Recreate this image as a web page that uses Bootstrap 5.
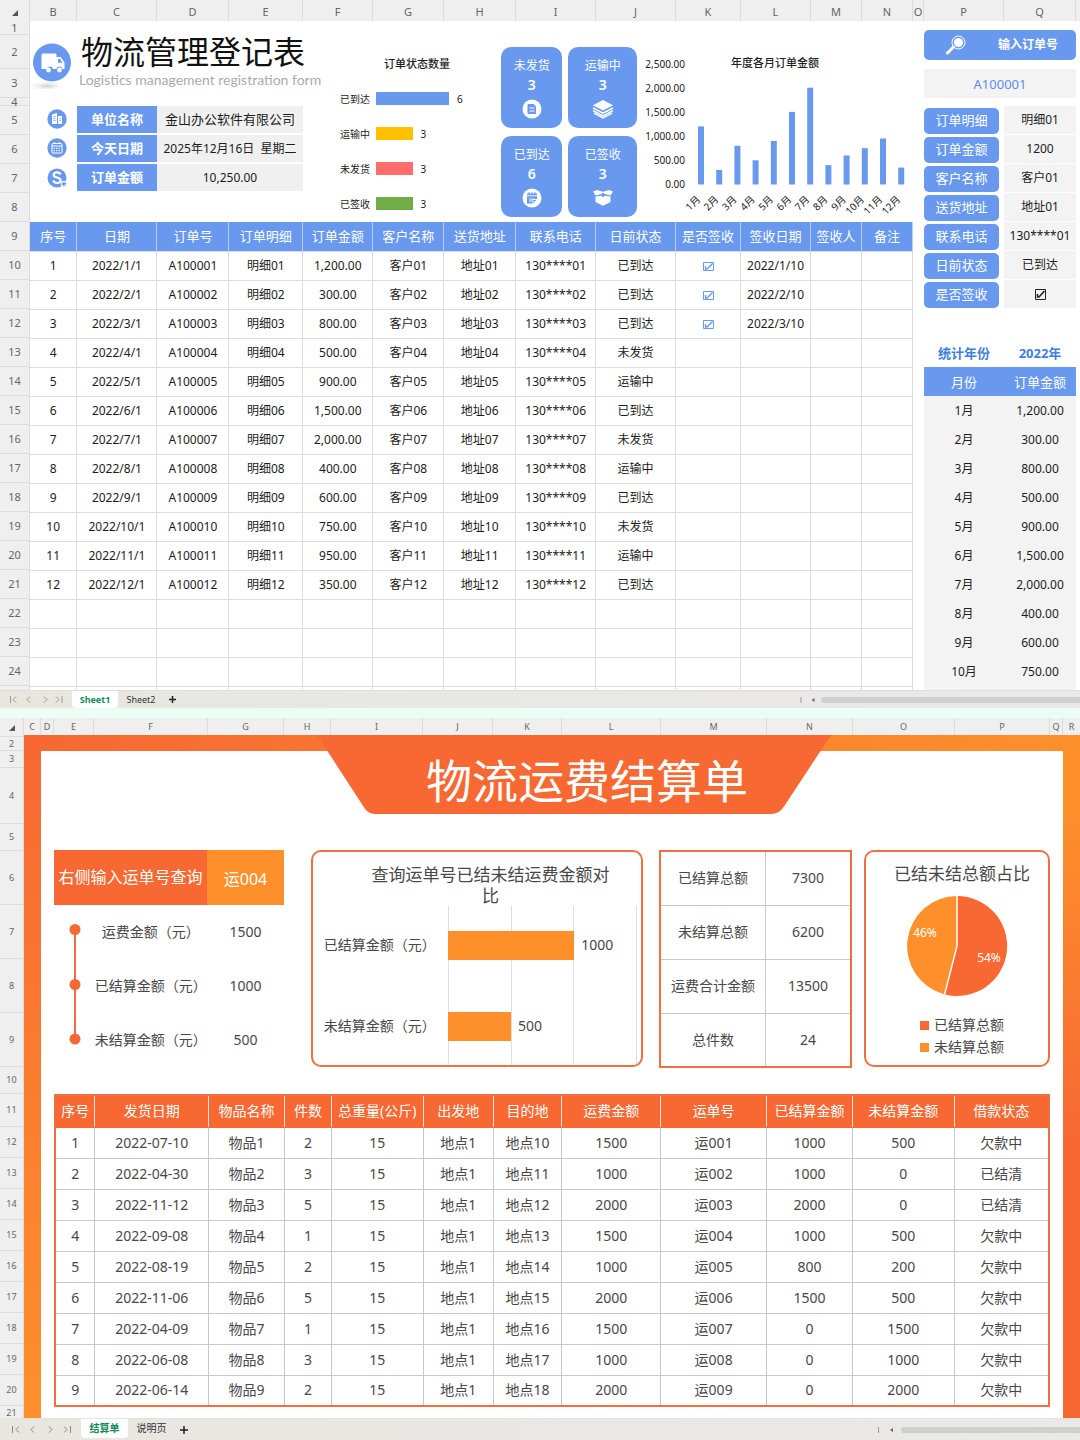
<!DOCTYPE html>
<html lang="zh-CN">
<head>
<meta charset="utf-8">
<meta name="viewport" content="width=device-width, initial-scale=1">
<title>物流管理登记表</title>
<link href="https://cdn.jsdelivr.net/npm/bootstrap@5.3.0/dist/css/bootstrap.min.css" rel="stylesheet">
<style>
:root { --blue:#6899ee; --orange:#f76833; --amber:#fd902b; --chrome:#efefef; --rule:#dcdcdc; --cell:#f3f3f3; }
body { font-family:"Noto Sans","Noto Sans CJK SC",sans-serif; font-size:12px; line-height:16px; color:#1c1c1c; background:#ecfdf6; }
h1, h2, h3, p, dl, dd, dt { margin:0; font-weight:400; }

/* spreadsheet chrome */
.colheads { display:grid; background:var(--chrome); color:#666; font-size:11px; text-align:center; }
.colheads > span { border-right:1px solid var(--rule); overflow:hidden; min-width:0; }
.colheads > span:last-child { border-right:0; }
.heads-a { height:21px; line-height:24px; grid-template-columns:30px 47fr 80fr 72fr 74fr 70fr 71fr 72fr 80fr 80fr 65fr 70fr 51fr 51fr 11fr 80fr 72fr 4fr; }
.heads-b { height:17px; line-height:18px; font-size:9px; grid-template-columns:24px 17px 13px 40fr 114fr 76fr 47fr 92fr 70fr 69fr 99fr 106fr 86fr 102fr 95fr 13px 17px; }
.rowheads { background:var(--chrome); color:#666; font-size:11px; border-right:1px solid var(--rule); }
.rowheads div { display:flex; align-items:center; justify-content:center; border-bottom:1px solid var(--rule); height:29px; }
.rowheads .last { border-bottom:0; }
.rowheads .tall-2 { height:2px; } .rowheads .tall-4 { height:4px; } .rowheads .tall-8 { height:8px; }
.rowheads .tall-14 { height:14px; } .rowheads .tall-17 { height:17px; } .rowheads .tall-27 { height:27px; }
.rowheads .tall-31 { height:31px; } .rowheads .tall-33 { height:33px; } .rowheads .tall-34 { height:34px; }
.rowheads .tall-54 { height:54px; } .rowheads .tall-56 { height:56px; }
.tabbar { background:linear-gradient(90deg,#e8e6df,#e9e9e8); border-top:1px solid #dedede; font-size:9px; position:relative; }
.tabbar.bar-a { height:18px; } .tabbar.bar-b { height:22px; border-top-color:#e4e3df; }
.tabbar a { color:#333; text-decoration:none; text-align:center; line-height:17px; }
.tabbar a.current { background:#fff; color:#138a58; font-weight:700; border-radius:0 0 4px 4px; }
.bar-a a { width:46px; }
.bar-b a { width:47px; font-size:10px; line-height:19px; height:19px; }
.tabbar button { border:0; background:none; padding:0; line-height:0; }
.tabbar .pager { width:72px; padding-left:9px; } .bar-b .pager { width:81px; }
.hscroll { width:26%; } .bar-b .hscroll { width:19%; }
.hscroll i { height:6px; border-radius:3px 0 0 3px; background:#cfcfcd; }

/* registration sheet */
.sheet-a { display:grid; grid-template-columns:30px minmax(0,883fr) 11fr minmax(0,152fr) 4fr; background:#fff; height:669px; overflow:hidden; }
.dash { height:201px; display:grid; grid-template-columns:minmax(0,292fr) minmax(0,179fr) minmax(0,136fr) minmax(0,276fr); }
.emblem { width:47px; padding-top:20px; }
.title-a { font-size:32px; line-height:42px; color:#111; padding:10px 0 0 4px; white-space:nowrap; }
.sub-a { font-size:14px; line-height:14px; color:#ababab; font-family:Lato,"Noto Sans",sans-serif; padding-left:2px; white-space:nowrap; }
.facts { display:grid; grid-template-columns:47fr 80fr 146fr 19fr; row-gap:2px; padding-top:17px; }
.facts dt, .facts dd { height:27px; line-height:27px; text-align:center; white-space:nowrap; }
.facts dt { background:var(--blue); color:#fff; font-weight:700; font-size:13px; }
.facts dd { background:#f0f0f0; font-size:12px; }
.facts dd.wide { font-size:13px; }
.facts svg { display:block; margin:2px 0 0 15px; }
.small-title { font-size:11px; font-weight:500; line-height:16px; text-align:center; height:60px; padding:35px 0 0 11px; }
.hbar { height:35px; font-size:10px; }
.hbar .key { width:54px; padding-right:6px; text-align:right; white-space:nowrap; }
.hbar i { display:block; height:13px; }
.tiles { display:grid; grid-template-columns:61fr 68fr; gap:8px 6px; padding:26px 0 4px; font-size:12px; text-align:center; }
.tile { background:var(--blue); color:#fff; border-radius:10px; height:81px; padding-top:10px; line-height:18px; }
.tile b { display:block; font-weight:600; font-size:14px; line-height:20px; }
.tile svg { display:block; margin:4px auto 0; }

.grid-a { table-layout:fixed; width:100%; margin:0; text-align:center; font-size:12px; white-space:nowrap; color:inherit; }
.grid-a td, .grid-a th { height:29px; padding:0; vertical-align:middle; border:1px solid var(--rule); border-left:0; background:#fff; color:#1c1c1c; }
.grid-a th { background:var(--blue); color:#fff; font-weight:400; font-size:13px; border-color:#b9cff6; border-top:0; border-bottom:0; }
.grid-a tr.stub td { height:4px; border-bottom:0; }
.tick { appearance:none; width:11px; height:11px; margin:0; vertical-align:middle; background:center/100% 100% no-repeat url("data:image/svg+xml,%3Csvg xmlns='http://www.w3.org/2000/svg' viewBox='0 0 11 11'%3E%3Cpath d='M.5 1.500h10v8H.5z' fill='none' stroke='%236899ee'/%3E%3Cpath d='M2.500 5v3h1.500L9.500 2.500' fill='none' stroke='%236899ee' stroke-width='1.400'/%3E%3C/svg%3E"); }
.tick.dark { background-image:url("data:image/svg+xml,%3Csvg xmlns='http://www.w3.org/2000/svg' viewBox='0 0 11 11'%3E%3Cpath d='M.5.5h10v10H.5z' fill='none' stroke='%23222'/%3E%3Cpath d='M2.500 5v3h1.500L9.500 2' fill='none' stroke='%23222' stroke-width='1.600'/%3E%3C/svg%3E"); }

.find { height:30px; background:var(--blue); color:#fff; border:0; border-radius:5px; font-size:12px; font-weight:700; padding:0 18px 0 22px; margin:9px 0; }
.order { height:29px; width:100%; border:0; background:var(--cell); color:#5a8fec; text-align:center; font-size:13px; padding:0; }
.detail { display:grid; grid-template-columns:minmax(0,75fr) minmax(0,72fr); column-gap:5px; margin-top:8px; text-align:center; }
.detail dt { height:26px; line-height:25px; margin:2px 0 1px; border-radius:5px; background:var(--blue); color:#fff; font-size:13px; }
.detail dd { height:28px; line-height:28px; margin-bottom:1px; background:var(--cell); white-space:nowrap; }
.grid-m { table-layout:fixed; width:100%; margin:29px 0 0; text-align:center; color:#1c1c1c; }
.grid-m td, .grid-m th { height:29px; padding:0; border:0; vertical-align:middle; background:var(--cell); color:#1c1c1c; font-weight:400; font-size:12px; }
.grid-m .year th { background:#fff; color:#3f7fe0; font-weight:700; font-size:13px; }
.grid-m .cap th { background:var(--blue); color:#fff; font-size:13px; }
.month-box { background:linear-gradient(var(--cell),var(--cell)) bottom/100% 40px no-repeat; }

/* settlement sheet */
.second { margin-top:10px; }
.sheet-b { display:grid; grid-template-columns:24px minmax(0,1fr); color:#484848; font-size:14px; height:683px; overflow:hidden; }
.sheet-b .rowheads { font-size:9px; }
.frame { background:
  linear-gradient(var(--orange),var(--amber)) left/17px 100% no-repeat,
  linear-gradient(var(--amber) 10%,var(--orange) 60%) right/17px 100% no-repeat,
  linear-gradient(90deg,var(--orange),var(--amber)) top/100% 16px no-repeat, #fff; padding:0 30px; }
.banner { width:52%; margin:0 auto 0 26%; height:79px; padding:10px 0 0 30px; color:#fff; font-size:46px; line-height:70px; text-align:center; white-space:nowrap;
  background:center/100% 100% no-repeat url("data:image/svg+xml,%3Csvg xmlns='http://www.w3.org/2000/svg' viewBox='0 0 510 79' preserveAspectRatio='none'%3E%3Cpath d='M4 0h506L464 71q-5 8-13 8H61q-7 0-11-7z' fill='%23f76833'/%3E%3C/svg%3E"); }
.panels { display:grid; grid-template-columns:minmax(0,230fr) 27fr minmax(0,333fr) 16fr minmax(0,193fr) 12fr minmax(0,186fr); margin-top:36px; height:217px; }
.ask { height:55px; color:#fff; }
.ask label { flex:2 0 0; background:var(--orange); font-size:16px; line-height:55px; text-align:center; white-space:nowrap; }
.ask input { flex:1 0 0; min-width:0; border:0; border-radius:0; background:var(--amber); color:#fff; text-align:center; font-size:16px; padding:0; }
.steps { display:grid; grid-template-columns:40px minmax(0,113fr) minmax(0,76fr); text-align:center; line-height:54px; white-space:nowrap; }
.steps svg { grid-row:1 / 4; }
.cardbox { border:2px solid #f0703f; border-radius:10px; background:#fff; height:217px; overflow:hidden; }
.chart-title { font-size:17px; line-height:21px; text-align:center; }
.cmp-title { width:250px; max-width:80%; margin:12px 26px 0 auto; }
.pie-title { padding:11px 0 0 10px; }
.cmp { height:163px; display:grid; grid-template-columns:124px minmax(0,190fr) 4px; padding-left:11px; }
.cmp .keys { display:flex; flex-direction:column; padding-top:29px; white-space:nowrap; line-height:20px; }
.cmp .keys span, .plot div { height:81px; }
.cmp .plot { background:repeating-linear-gradient(90deg,#dedede 0 1px,transparent 1px 33.200%); padding-top:25px; }
.plot div { display:flex; align-items:flex-start; line-height:28px; gap:7px; }
.plot i { height:29px; background:var(--amber); }
.sums { table-layout:fixed; width:100%; margin:0; border:2px solid #f0703f; text-align:center; }
.sums th, .sums td { height:54px; padding:0; font-weight:400; vertical-align:middle; border:1px solid #c8c8c8; white-space:nowrap; }
.pie { display:block; margin:9px 0 15px; }
.legend-row { line-height:22px; gap:5px; padding-left:10px; }
.legend-row i { width:9px; height:9px; }
.k-orange { background:var(--orange); } .k-amber { background:var(--amber); }
.grid-b { table-layout:fixed; width:100%; margin:27px 0 0; border:2px solid #f0703f; text-align:center; white-space:nowrap; }
.grid-b th, .grid-b td { padding:0; height:31px; vertical-align:middle; border:1px solid #c8c8c8; font-weight:400; }
.grid-b th { height:32px; background:var(--orange); color:#fff; border-color:var(--orange) #ffe6dc; }
</style>
</head>
<body>

<section>
  <div class="colheads heads-a" id="headsA"></div>
  <div class="sheet-a">
    <div class="rowheads" id="rowsA"></div>

    <div>
      <div class="dash">
        <div>
          <div class="d-flex">
            <div class="emblem">
              <svg width="42" height="48" viewBox="0 0 42 48" aria-hidden="true" class="d-block">
                <defs><radialGradient id="shade"><stop offset="0" stop-color="#cfcfcf"/><stop offset="1" stop-color="#fff" stop-opacity="0"/></radialGradient></defs>
                <ellipse cx="17" cy="45" rx="21" ry="6" fill="url(#shade)"/>
                <circle cx="22" cy="21.500" r="19" fill="#6899ee"/>
                <path d="M13 12.500h12a1.500 1.500 0 0 1 1.500 1.500v2h4l4 5.500V28h-2a3.200 3.200 0 0 0-6.200 0h-3.300a3.200 3.200 0 0 0-6.200 0H11.500V14a1.500 1.500 0 0 1 1.500-1.500z" fill="#fff"/>
                <path d="M28 18h2l2.500 3.800H28z" fill="#6899ee"/>
                <circle cx="18.500" cy="29" r="2.400" fill="#fff"/><circle cx="29.500" cy="29" r="2.400" fill="#fff"/>
              </svg>
            </div>
            <div>
              <h1 class="title-a">物流管理登记表</h1>
              <p class="sub-a">Logistics management registration form</p>
            </div>
          </div>
          <dl class="facts">
            <svg width="24" height="24" viewBox="0 0 24 24" aria-hidden="true"><circle cx="12" cy="11" r="9.700" fill="#6899ee"/><path d="M7 6.500 12 5v11H7zM13 8h4v8h-4z" fill="#fff"/><path d="M8.500 8.500h2M8.500 10.500h2M8.500 12.500h2M14.200 10.500h1.600M14.200 12.500h1.600" stroke="#6899ee" stroke-width=".8"/></svg>
            <dt>单位名称</dt><dd class="wide">金山办公软件有限公司</dd><span></span>
            <svg width="24" height="24" viewBox="0 0 24 24" aria-hidden="true"><circle cx="12" cy="11" r="9.700" fill="#6899ee"/><rect x="7" y="6.500" width="10" height="9.500" rx="1" fill="none" stroke="#fff"/><path d="M7 9h10M9.500 5v2M14.500 5v2" stroke="#fff"/><path d="M8.500 11.300h7M8.500 13.700h7" stroke="#fff" stroke-dasharray="1.500 1"/></svg>
            <dt>今天日期</dt><dd>2025年12月16日&nbsp; 星期二</dd><span></span>
            <svg width="24" height="24" viewBox="0 0 24 24" aria-hidden="true"><circle cx="12" cy="12" r="9.500" fill="#6899ee"/><path d="M15.500 8.500c-.6-1.600-2-2.100-3.500-2.100-2 0-3.400 1-3.400 2.500 0 3.300 7 1.900 7 5.400 0 1.700-1.500 2.700-3.500 2.700-1.800 0-3.300-.7-3.800-2.500" fill="none" stroke="#fff" stroke-width="2.200"/><circle cx="19" cy="18" r="3.200" fill="#fff"/><path d="M19 15.500v5M16.800 17l4.400 2M21.200 17l-4.400 2" stroke="#6899ee" stroke-width="1.200"/></svg>
            <dt>订单金额</dt><dd>10,250.00</dd><span></span>
          </dl>
        </div>

        <div>
          <h2 class="small-title">订单状态数量</h2>
          <div id="statusBars"></div>
        </div>

        <div class="tiles align-content-start">
          <div class="tile">未发货<b>3</b>
            <svg width="20" height="20" viewBox="0 0 20 20"><circle cx="10" cy="10" r="9.500" fill="#fff"/><path d="M6.500 5h5l2.500 2.500V15H6.500a1 1 0 0 1-1-1V6a1 1 0 0 1 1-1z" fill="#6899ee"/><path d="M7.500 9h5M7.500 12h5" stroke="#fff" stroke-width="1.200"/></svg></div>
          <div class="tile">运输中<b>3</b>
            <svg width="22" height="20" viewBox="0 0 22 20"><path d="M11 1l10 5.300L11 11.500 1 6.300z" fill="#fff"/><path d="M1 9l10 5.200L21 9M1 11.700l10 5.200 10-5.200M2 14.200l9 4.700 9-4.700" fill="none" stroke="#fff" stroke-width="1.500"/></svg></div>
          <div class="tile">已到达<b>6</b>
            <svg width="20" height="20" viewBox="0 0 20 20"><circle cx="10" cy="10" r="9.500" fill="#fff"/><path d="M5 5.500h10V11l-4 4.500H5z" fill="#6899ee"/><path d="M5 7.800h10M7 11h5M7 13h3M10.800 15.500V11.500H15" stroke="#fff" fill="none" stroke-width=".9"/><path d="M7 4v2M10 4v2M13 4v2" stroke="#6899ee"/></svg></div>
          <div class="tile">已签收<b>3</b>
            <svg width="22" height="20" viewBox="0 0 22 20"><path d="M1 3.500 5 2l6 1.800L17 2l4 1.500-2.500 4L12.500 6 11 4.500 9.500 6l-6 1.500z" fill="#fff"/><path d="M3.500 8.500 9 7.800l2 1.500 2-1.500 5.500.7V14L11 17.800 3.500 14z" fill="#fff"/></svg></div>
        </div>

        <svg id="yearChart" viewBox="0 0 276 201" width="100%" height="201" role="img" aria-label="年度各月订单金额" font-size="10" fill="#222"></svg>
      </div>

      <table class="table grid-a" id="orders"></table>
    </div>

    <div></div>

    <aside class="d-flex flex-column month-box">
      <button type="button" class="find d-flex align-items-center justify-content-between">
        <svg width="20" height="20" viewBox="0 0 20 20" aria-hidden="true"><circle cx="12.500" cy="7.500" r="6.500" fill="none" stroke="#fff"/><circle cx="12.500" cy="7.500" r="4.600" fill="#fff"/><path d="M7.500 12 1.500 18" stroke="#fff" stroke-width="3" stroke-linecap="round"/></svg>
        <span>输入订单号</span>
      </button>
      <input class="order" type="text" value="A100001" aria-label="输入订单号">
      <dl class="detail">
        <dt>订单明细</dt><dd>明细01</dd>
        <dt>订单金额</dt><dd>1200</dd>
        <dt>客户名称</dt><dd>客户01</dd>
        <dt>送货地址</dt><dd>地址01</dd>
        <dt>联系电话</dt><dd>130****01</dd>
        <dt>日前状态</dt><dd>已到达</dd>
        <dt>是否签收</dt><dd><input type="checkbox" class="tick dark" checked aria-label="是否签收"></dd>
      </dl>
      <table class="table grid-m" id="months"></table>
    </aside>
    <div></div>
  </div>

  <nav class="tabbar bar-a d-flex">
    <div class="pager d-flex align-items-center">
      <svg width="54" height="9" viewBox="0 0 54 9" fill="none" stroke="#999"><path d="M1.500 1v7M7 1.500 4 4.500l3 3M21 1.500l-3 3 3 3M35 1.500l3 3-3 3M47 1.500l3 3-3 3M53 1v7"/></svg>
    </div>
    <a class="current" href="#orders">Sheet1</a>
    <a href="#orders">Sheet2</a>
    <button type="button" class="ms-1" aria-label="新建工作表"><svg width="9" height="9" viewBox="0 0 9 9"><path d="M4.500 1v7M1 4.500h7" stroke="#222" stroke-width="1.500"/></svg></button>
    <div class="hscroll d-flex align-items-center ms-auto">
      <svg width="22" height="8" viewBox="0 0 22 8"><path d="M2 1v6" stroke="#999"/><path d="M15.500 2v4l-3-2z" fill="#666"/></svg>
      <i class="flex-grow-1"></i>
    </div>
  </nav>
</section>

<section class="second">
  <div class="colheads heads-b" id="headsB"></div>
  <div class="sheet-b">
    <div class="rowheads" id="rowsB"></div>
    <div class="frame">
      <h1 class="banner">物流运费结算单</h1>

      <div class="panels">
        <div>
          <div class="ask d-flex">
            <label for="waybill">右侧输入运单号查询</label>
            <input id="waybill" type="text" value="运004">
          </div>
          <div class="steps">
            <svg width="40" height="162" viewBox="0 0 40 162" aria-hidden="true"><path d="M21 24v110" stroke="#f0703f" stroke-width="2"/><g fill="#f76833"><circle cx="21" cy="24.500" r="5.500"/><circle cx="21" cy="79.500" r="5.500"/><circle cx="21" cy="134" r="5.500"/></g></svg>
            <span>运费金额（元）</span><span>1500</span>
            <span>已结算金额（元）</span><span>1000</span>
            <span>未结算金额（元）</span><span>500</span>
          </div>
        </div>
        <div></div>
        <div class="cardbox">
          <h2 class="chart-title cmp-title">查询运单号已结未结运费金额对比</h2>
          <div class="cmp">
            <div class="keys"><span>已结算金额（元）</span><span>未结算金额（元）</span></div>
            <div class="plot" id="cmpBars"></div>
          </div>
        </div>
        <div></div>
        <table class="sums">
          <colgroup><col style="width:55%"><col></colgroup>
          <tbody>
            <tr><th scope="row">已结算总额</th><td>7300</td></tr>
            <tr><th scope="row">未结算总额</th><td>6200</td></tr>
            <tr><th scope="row">运费合计金额</th><td>13500</td></tr>
            <tr><th scope="row">总件数</th><td>24</td></tr>
          </tbody>
        </table>
        <div></div>
        <div class="cardbox d-flex flex-column align-items-center">
          <h2 class="chart-title pie-title">已结未结总额占比</h2>
          <svg class="pie" width="104" height="106" viewBox="0 -1 104 106" role="img" aria-label="已结未结总额占比" font-size="12" fill="#fff" text-anchor="middle">
            <path d="M52 52V2a50 50 0 1 1-12.400 98.400z" fill="#f76833"/>
            <path d="M52 52 39.600 100.400A50 50 0 0 1 52 2z" fill="#fd902b"/>
            <path d="M52 2v50L39.600 100.400" fill="none" stroke="#fff" stroke-width="1.500"/>
            <text x="20" y="43">46%</text><text x="84" y="68">54%</text>
          </svg>
          <div>
            <div class="legend-row d-flex align-items-center"><i class="k-orange"></i>已结算总额</div>
            <div class="legend-row d-flex align-items-center"><i class="k-amber"></i>未结算总额</div>
          </div>
        </div>
      </div>

      <table class="grid-b" id="freight"></table>
    </div>
  </div>

  <nav class="tabbar bar-b d-flex">
    <div class="pager d-flex align-items-center">
      <svg width="64" height="9" viewBox="0 0 64 9" fill="none" stroke="#888"><path d="M3.500 1v7M10 1.500 7 4.500l3 3M25 1.500l-3 3 3 3M40 1.500l3 3-3 3M55 1.500l3 3-3 3M61.500 1v7"/></svg>
    </div>
    <a class="current" href="#freight">结算单</a>
    <a href="#freight">说明页</a>
    <button type="button" class="ms-1" aria-label="新建工作表"><svg width="10" height="10" viewBox="0 0 10 10"><path d="M5 1v8M1 5h8" stroke="#222" stroke-width="1.500"/></svg></button>
    <div class="hscroll d-flex align-items-center ms-auto">
      <svg width="26" height="8" viewBox="0 0 26 8"><path d="M3.500 1v6" stroke="#999"/><path d="M18 2v4l-3-2z" fill="#666"/></svg>
      <i class="flex-grow-1"></i>
    </div>
  </nav>
</section>

<script src="https://cdn.jsdelivr.net/npm/bootstrap@5.3.0/dist/js/bootstrap.bundle.min.js"></script>
<script>
const put = (id, html) => { document.getElementById(id).innerHTML = html; };
const corner = '<svg width="6" height="6" viewBox="0 0 6 6"><path d="M6 0v6H0z" fill="#555"/></svg>';
const heads = letters => `<span>${corner}</span>` + letters.map(l => `<span>${l}</span>`).join('');
put('headsA', heads([...'BCDEFGHIJKLMNOPQ', '']));
put('headsB', heads([...'CDEFGHIJKLMNOPQR']));

const heightsA = { 1:'tall-14', 2:'tall-34', 4:'tall-8' };
put('rowsA', Array.from({ length: 24 }, (_, i) => `<div class="${heightsA[i + 1] || ''}">${i + 1}</div>`).join('') + '<div class="tall-4 last"></div>');
const heightsB = { 2:'tall-14', 3:'tall-17', 4:'tall-56', 5:'tall-27', 6:'tall-54', 7:'tall-54', 8:'tall-54', 9:'tall-54', 10:'tall-27', 11:'tall-33', 21:'tall-14 last' };
put('rowsB', '<div class="tall-2"></div>' + Array.from({ length: 20 }, (_, i) => `<div class="${heightsB[i + 2] || 'tall-31'}">${i + 2}</div>`).join(''));

const cols = widths => { const t = widths.reduce((a, b) => a + b); return '<colgroup>' + widths.map(w => `<col style="width:${w / t * 100}%">`).join('') + '</colgroup>'; };
const thead = names => '<thead><tr>' + names.map(n => `<th scope="col">${n}</th>`).join('') + '</tr></thead>';
const money = n => n.toLocaleString('en-US', { minimumFractionDigits: 2 });

// orders
const amounts = [1200, 300, 800, 500, 900, 1500, 2000, 400, 600, 750, 950, 350];
const states = ['已到达','已到达','已到达','未发货','运输中','已到达','未发货','运输中','已到达','未发货','运输中','已到达'];
const orderRows = amounts.map((a, i) => {
  const n = i + 1, nn = String(n).padStart(2, '0'), got = i < 3;
  return `<tr><td>${n}</td><td>2022/${n}/1</td><td>A1000${nn}</td><td>明细${nn}</td><td>${money(a)}</td><td>客户${nn}</td><td>地址${nn}</td><td>130****${nn}</td><td>${states[i]}</td><td>${got ? `<input type="checkbox" class="tick" checked aria-label="订单${nn}已签收">` : ''}</td><td>${got ? `2022/${n}/10` : ''}</td><td></td><td></td></tr>`;
}).join('');
const blank = '<td></td>'.repeat(13);
put('orders', cols([47,80,72,74,70,71,72,80,80,65,70,51,51]) +
  thead(['序号','日期','订单号','订单明细','订单金额','客户名称','送货地址','联系电话','日前状态','是否签收','签收日期','签收人','备注']) +
  `<tbody>${orderRows}${`<tr>${blank}</tr>`.repeat(3)}<tr class="stub">${blank}</tr></tbody>`);

put('months', cols([80, 72]) + '<thead><tr class="year"><th>统计年份</th><th>2022年</th></tr><tr class="cap"><th scope="col">月份</th><th scope="col">订单金额</th></tr></thead><tbody>' +
  amounts.slice(0, 10).map((a, i) => `<tr><td>${i + 1}月</td><td>${money(a)}</td></tr>`).join('') + '</tbody>');

// status counts
put('statusBars', [['已到达', 6, '#6899ee'], ['运输中', 3, '#ffc000'], ['未发货', 3, '#ff6d6d'], ['已签收', 3, '#70ad47']].map(([k, v, c]) =>
  `<div class="hbar d-flex align-items-center"><span class="key">${k}</span><i style="width:${v / 6 * 73}px;background:${c}"></i><span class="ps-2">${v}</span></div>`).join(''));

// monthly totals
let chart = '<text x="138" y="46" font-size="11" font-weight="500" text-anchor="middle">年度各月订单金额</text>';
for (let k = 0; k <= 5; k++) chart += `<text x="48" y="${167 - k * 24}" text-anchor="end">${money(k * 500)}</text>`;
amounts.forEach((a, i) => {
  const x = 64 + i * 18.2, h = a * 0.0484;
  chart += `<rect x="${x - 3}" y="${163.5 - h}" width="6" height="${h}" fill="#6899ee"/>`;
  chart += `<text text-anchor="end" transform="translate(${x} 179) rotate(-45)">${i + 1}月</text>`;
});
put('yearChart', chart);

// freight
put('cmpBars', [1000, 500].map(v => `<div><i style="width:${v / 1500 * 100}%"></i>${v}</div>`).join(''));
const freight = [
  ['2022-07-10', 2, 1500, 1000, 500], ['2022-04-30', 3, 1000, 1000, 0], ['2022-11-12', 5, 2000, 2000, 0],
  ['2022-09-08', 1, 1500, 1000, 500], ['2022-08-19', 2, 1000, 800, 200], ['2022-11-06', 5, 2000, 1500, 500],
  ['2022-04-09', 1, 1500, 0, 1500], ['2022-06-08', 3, 1000, 0, 1000], ['2022-06-14', 2, 2000, 0, 2000]];
put('freight', cols([40,114,76,47,92,70,69,99,106,86,102,95]) +
  thead(['序号','发货日期','物品名称','件数','总重量(公斤)','出发地','目的地','运费金额','运单号','已结算金额','未结算金额','借款状态']) +
  '<tbody>' + freight.map(([d, q, f, s, u], i) => `<tr><td>${i + 1}</td><td>${d}</td><td>物品${i + 1}</td><td>${q}</td><td>15</td><td>地点1</td><td>地点${i + 10}</td><td>${f}</td><td>运00${i + 1}</td><td>${s}</td><td>${u}</td><td>${u ? '欠款中' : '已结清'}</td></tr>`).join('') + '</tbody>');
</script>
</body>
</html>
